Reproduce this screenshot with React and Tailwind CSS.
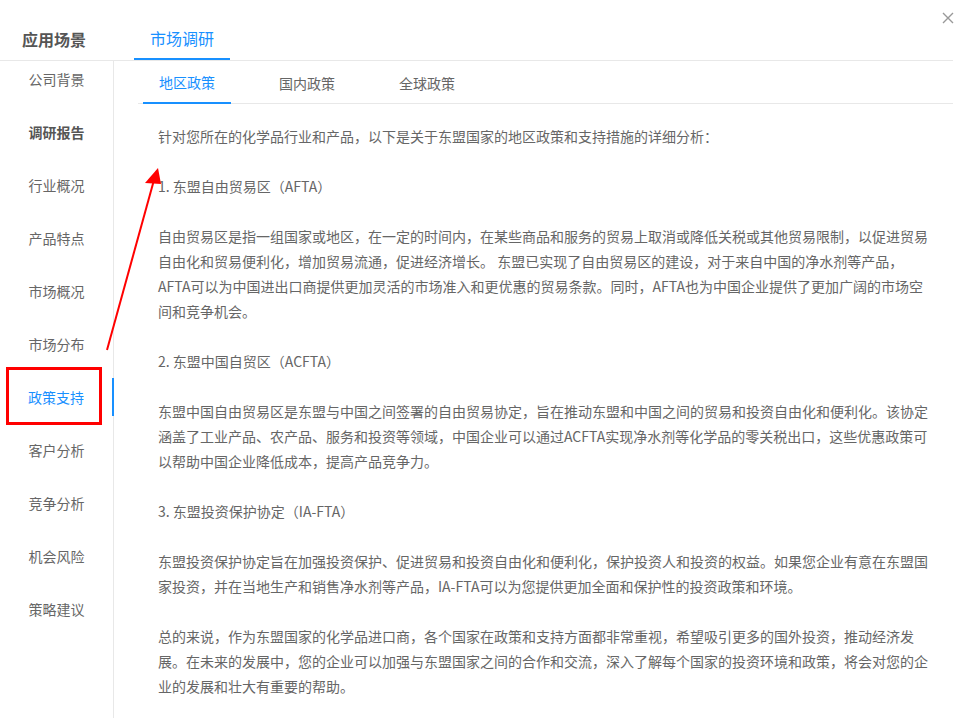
const menu = [
  "公司背景",
  "调研报告",
  "行业概况",
  "产品特点",
  "市场概况",
  "市场分布",
  "政策支持",
  "客户分析",
  "竞争分析",
  "机会风险",
  "策略建议",
];

const subTabs = ["地区政策", "国内政策", "全球政策"];

const paragraphs = [
  "针对您所在的化学品行业和产品，以下是关于东盟国家的地区政策和支持措施的详细分析：",
  "1. 东盟自由贸易区（AFTA）",
  "自由贸易区是指一组国家或地区，在一定的时间内，在某些商品和服务的贸易上取消或降低关税或其他贸易限制，以促进贸易自由化和贸易便利化，增加贸易流通，促进经济增长。 东盟已实现了自由贸易区的建设，对于来自中国的净水剂等产品，AFTA可以为中国进出口商提供更加灵活的市场准入和更优惠的贸易条款。同时，AFTA也为中国企业提供了更加广阔的市场空间和竞争机会。",
  "2. 东盟中国自贸区（ACFTA）",
  "东盟中国自由贸易区是东盟与中国之间签署的自由贸易协定，旨在推动东盟和中国之间的贸易和投资自由化和便利化。该协定涵盖了工业产品、农产品、服务和投资等领域，中国企业可以通过ACFTA实现净水剂等化学品的零关税出口，这些优惠政策可以帮助中国企业降低成本，提高产品竞争力。",
  "3. 东盟投资保护协定（IA-FTA）",
  "东盟投资保护协定旨在加强投资保护、促进贸易和投资自由化和便利化，保护投资人和投资的权益。如果您企业有意在东盟国家投资，并在当地生产和销售净水剂等产品，IA-FTA可以为您提供更加全面和保护性的投资政策和环境。",
  "总的来说，作为东盟国家的化学品进口商，各个国家在政策和支持方面都非常重视，希望吸引更多的国外投资，推动经济发展。在未来的发展中，您的企业可以加强与东盟国家之间的合作和交流，深入了解每个国家的投资环境和政策，将会对您的企业的发展和壮大有重要的帮助。",
];

export default function App() {
  return (
    <div
      className="relative w-[969px] h-[718px] bg-white overflow-hidden text-[#666]"
      style={{ fontFamily: '"Microsoft YaHei", "Noto Sans CJK SC", "Noto Sans", sans-serif' }}
    >
      {/* close */}
      <button className="absolute right-[15px] top-[12px] w-[12px] h-[12px] text-[#999]">
        <svg viewBox="0 0 12 12" className="w-[12px] h-[12px]" fill="none" stroke="currentColor" strokeWidth="1.4">
          <path d="M1 1 L11 11 M11 1 L1 11" />
        </svg>
      </button>

      <div className="w-[953px] h-full flex flex-col">
        {/* header */}
        <div className="flex h-[60px] shrink-0">
          <div className="w-[134px] pl-[22px] pt-[18px] flex items-center text-[16px] font-bold text-[#555]">
            应用场景
          </div>
          <div className="px-4 pt-[18px] flex items-center text-[16px] text-[#1890ff] border-b-2 border-[#1890ff]">
            市场调研
          </div>
        </div>
        <div className="h-px shrink-0 bg-[#e8e8e8]" />

        <div className="flex flex-1 min-h-0">
          {/* sidebar */}
          <div className="w-[114px] shrink-0 border-r border-[#e8e8e8] flex flex-col gap-[15px] -mt-px">
            {menu.map((m) => {
              const active = m === "政策支持";
              return (
                <div
                  key={m}
                  className={
                    active
                      ? "h-[38px] shrink-0 flex items-center justify-center text-[14px] text-[#1890ff] border-r-2 border-[#1890ff] -mr-px"
                      : m === "调研报告"
                      ? "h-[38px] shrink-0 flex items-center justify-center text-[14px] font-bold text-[#555]"
                      : "h-[38px] shrink-0 flex items-center justify-center text-[14px] text-[#666]"
                  }
                >
                  {m}
                </div>
              );
            })}
          </div>

          {/* main */}
          <div className="flex-1 min-w-0 pl-[24px] flex flex-col overflow-hidden">
            <div className="flex shrink-0 gap-[32px] pl-[5px] h-[43px] border-b border-[#e8e8e8]">
              {subTabs.map((t, i) => (
                <div
                  key={t}
                  className={
                    i === 0
                      ? "w-[88px] flex items-center justify-center pt-[2px] text-[14px] text-[#1890ff] border-b-2 border-[#1890ff] -mb-px"
                      : "w-[88px] flex items-center justify-center pt-[2px] text-[14px] text-[#666]"
                  }
                >
                  {t}
                </div>
              ))}
            </div>
            <div className="shrink-0 pl-[20px] pr-[19px] pt-[20px] text-[14px] leading-[25px] text-[#666]">
              {paragraphs.map((p, i) => (
                <p key={i} className="mb-[25px]">
                  {p}
                </p>
              ))}
            </div>
          </div>
        </div>
      </div>

      {/* annotation: red box */}
      <div className="absolute left-[6px] top-[367px] w-[96px] h-[58px] border-[3px] border-[#ff0000]" />

      {/* annotation: arrow */}
      <svg className="absolute left-0 top-0 pointer-events-none" width="969" height="718">
        <line x1="107" y1="350" x2="154" y2="180" stroke="#ff0000" strokeWidth="2" />
        <polygon points="158,168 145,183 161,184" fill="#ff0000" />
      </svg>
    </div>
  );
}
